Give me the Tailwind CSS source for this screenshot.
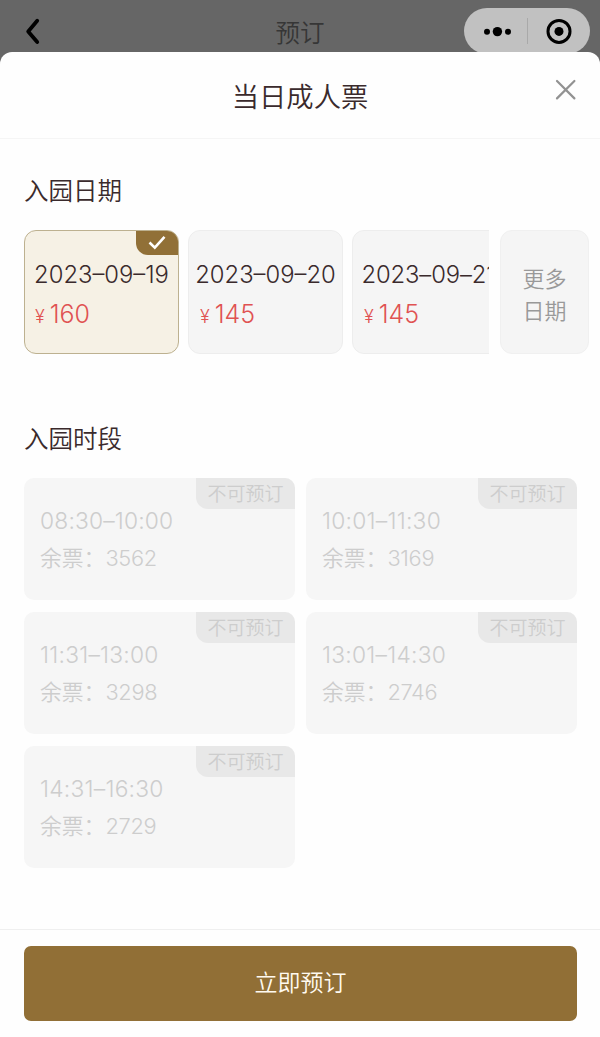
<!DOCTYPE html>
<html lang="zh-CN">
<head>
<meta charset="utf-8">
<title>预订</title>
<script src="https://cdn.jsdelivr.net/npm/@tailwindcss/browser@4"></script>
</head>
<body class="h-[1037px] w-[600px] overflow-hidden bg-[#666666] font-['Inter','Noto_Sans_CJK_SC',sans-serif] font-[350] text-[#3a2a2c]">
<div class="flex h-full flex-col">
  <header class="relative flex h-[52px] shrink-0 items-start justify-center">
    <svg class="absolute left-[24px] top-[17px]" width="18" height="30" viewBox="0 0 18 30" fill="none" stroke="#000" stroke-width="3.8" stroke-linecap="round" stroke-linejoin="round"><path d="M13.2 3.8 4.2 14.4 13.2 25"/></svg>
    <h1 class="h-[67px] text-[24.5px] leading-[67px] text-[#363636]">预订</h1>
    <div class="absolute left-[464px] top-[8px] flex h-[46px] w-[126px] items-center rounded-full bg-[#c1c1c1]">
      <svg width="126" height="46" viewBox="0 0 126 46"><circle cx="23" cy="23.8" r="3"/><circle cx="33.4" cy="23.6" r="4.7"/><circle cx="44" cy="23.8" r="3"/><path d="M63.5 10v26" stroke="#a9a9a9"/><circle cx="95" cy="23.4" r="11" fill="none" stroke="#000" stroke-width="3"/><circle cx="95" cy="23.4" r="4.5"/></svg>
    </div>
  </header>

  <main class="relative flex flex-1 flex-col rounded-t-[12px] bg-[#fefefe]">
    <div class="flex h-[87px] shrink-0 items-center justify-center border-b border-[#f5f5f5] pt-[5px]">
      <h2 class="text-[27.3px] leading-[40px]">当日成人票</h2>
      <svg class="absolute left-[555px] top-[27px]" width="22" height="22" viewBox="0 0 22 22" fill="none" stroke="#929292" stroke-width="2.2" stroke-linecap="round"><path d="M2 2 19.4 19.4M19.4 2 2 19.4"/></svg>
    </div>

    <section class="pl-6">
      <h3 class="mt-[32px] h-[40px] text-[24.5px] leading-[40px]">入园日期</h3>
      <div class="mt-[19px] flex">
        <div class="flex w-[465px] gap-[9px] overflow-hidden">
          <div class="relative h-[124px] w-[155px] shrink-0 overflow-hidden rounded-[12px] border border-[#bdb190] bg-[#f6f1e5] pt-[28px]">
            <div class="absolute right-0 top-0 flex h-[24px] w-[42px] items-center justify-center rounded-bl-[12px] bg-[#917037]">
              <svg width="18" height="16" viewBox="0 0 18 16" fill="none" stroke="#fff" stroke-width="2.6"><path d="M1.5 7.5 6.8 12.6 16.5 1.8"/></svg>
            </div>
            <div class="h-8 text-center text-[23.8px] leading-8 whitespace-nowrap">2023–09–19</div>
            <div class="mt-[7px] flex h-8 items-baseline gap-[5px] pl-[10px] leading-8 text-[#e05252]"><span class="text-[18px]">¥</span><span class="text-[25px]">160</span></div>
          </div>
          <div class="h-[124px] w-[155px] shrink-0 overflow-hidden rounded-[12px] border border-[#ededed] bg-[#f5f5f5] pt-[28px]">
            <div class="h-8 text-center text-[23.8px] leading-8 whitespace-nowrap">2023–09–20</div>
            <div class="mt-[7px] flex h-8 items-baseline gap-[5px] pl-[11px] leading-8 text-[#e05252]"><span class="text-[18px]">¥</span><span class="text-[25px]">145</span></div>
          </div>
          <div class="h-[124px] w-[155px] shrink-0 overflow-hidden rounded-[12px] border border-[#ededed] bg-[#f5f5f5] pt-[28px]">
            <div class="h-8 pr-[2px] text-center text-[23.8px] leading-8 tracking-[-0.1px] whitespace-nowrap">2023–09–21</div>
            <div class="mt-[7px] flex h-8 items-baseline gap-[5px] pl-[11px] leading-8 text-[#e05252]"><span class="text-[18px]">¥</span><span class="text-[25px]">145</span></div>
          </div>
        </div>
        <div class="ml-[11px] flex h-[124px] w-[89px] items-center justify-center rounded-[12px] border border-[#f0f0f0] bg-[#f5f5f5] pt-[5px] text-center text-[22px] leading-8 text-[#999]">更多<br>日期</div>
      </div>
    </section>

    <section class="px-6">
      <h3 class="mt-[65px] h-[40px] text-[24.5px] leading-[40px]">入园时段</h3>
      <div class="mt-[19px] grid grid-cols-[271px_271px] gap-x-[11px] gap-y-[11.8px] text-[#cdcdcd]">
        <div class="relative h-[122px] overflow-hidden rounded-[10px] bg-[#f6f6f6] pl-4 pt-[27px]">
          <div class="absolute right-0 top-0 h-[31px] w-[99px] rounded-bl-[12px] bg-[#e8e8e8] text-center text-[19px] leading-[33px]">不可预订</div>
          <div class="h-8 text-[22.8px] leading-8 tracking-[0.18px]">08:30–10:00</div>
          <div class="mt-[5px] flex h-8 text-[21.8px] leading-8">余票：<span class="tracking-[-0.3px]">3562</span></div>
        </div>
        <div class="relative h-[122px] overflow-hidden rounded-[10px] bg-[#f6f6f6] pl-4 pt-[27px]">
          <div class="absolute right-0 top-0 h-[31px] w-[99px] rounded-bl-[12px] bg-[#e8e8e8] text-center text-[19px] leading-[33px]">不可预订</div>
          <div class="h-8 text-[22.8px] leading-8 tracking-[0.25px]">10:01–11:30</div>
          <div class="mt-[5px] flex h-8 text-[21.8px] leading-8">余票：<span class="tracking-[-0.3px]">3169</span></div>
        </div>
        <div class="relative h-[122px] overflow-hidden rounded-[10px] bg-[#f6f6f6] pl-4 pt-[27px]">
          <div class="absolute right-0 top-0 h-[31px] w-[99px] rounded-bl-[12px] bg-[#e8e8e8] text-center text-[19px] leading-[33px]">不可预订</div>
          <div class="h-8 text-[22.8px] leading-8 tracking-[0.25px]">11:31–13:00</div>
          <div class="mt-[5px] flex h-8 text-[21.8px] leading-8">余票：<span class="tracking-[-0.3px]">3298</span></div>
        </div>
        <div class="relative h-[122px] overflow-hidden rounded-[10px] bg-[#f6f6f6] pl-4 pt-[27px]">
          <div class="absolute right-0 top-0 h-[31px] w-[99px] rounded-bl-[12px] bg-[#e8e8e8] text-center text-[19px] leading-[33px]">不可预订</div>
          <div class="h-8 text-[22.8px] leading-8 tracking-[0.25px]">13:01–14:30</div>
          <div class="mt-[5px] flex h-8 text-[21.8px] leading-8">余票：<span class="tracking-[-0.3px]">2746</span></div>
        </div>
        <div class="relative h-[122px] overflow-hidden rounded-[10px] bg-[#f6f6f6] pl-4 pt-[27px]">
          <div class="absolute right-0 top-0 h-[31px] w-[99px] rounded-bl-[12px] bg-[#e8e8e8] text-center text-[19px] leading-[33px]">不可预订</div>
          <div class="h-8 text-[22.8px] leading-8 tracking-[0.25px]">14:31–16:30</div>
          <div class="mt-[5px] flex h-8 text-[21.8px] leading-8">余票：<span class="tracking-[-0.3px]">2729</span></div>
        </div>
      </div>
    </section>

    <footer class="mt-auto h-[108px] border-t border-[#efefef] pl-6 pt-4">
      <button class="h-[75px] w-[553px] rounded-[7px] bg-[#916f36] text-[23px] font-[350] text-[#fffaf0]">立即预订</button>
    </footer>
  </main>
</div>
</body>
</html>
